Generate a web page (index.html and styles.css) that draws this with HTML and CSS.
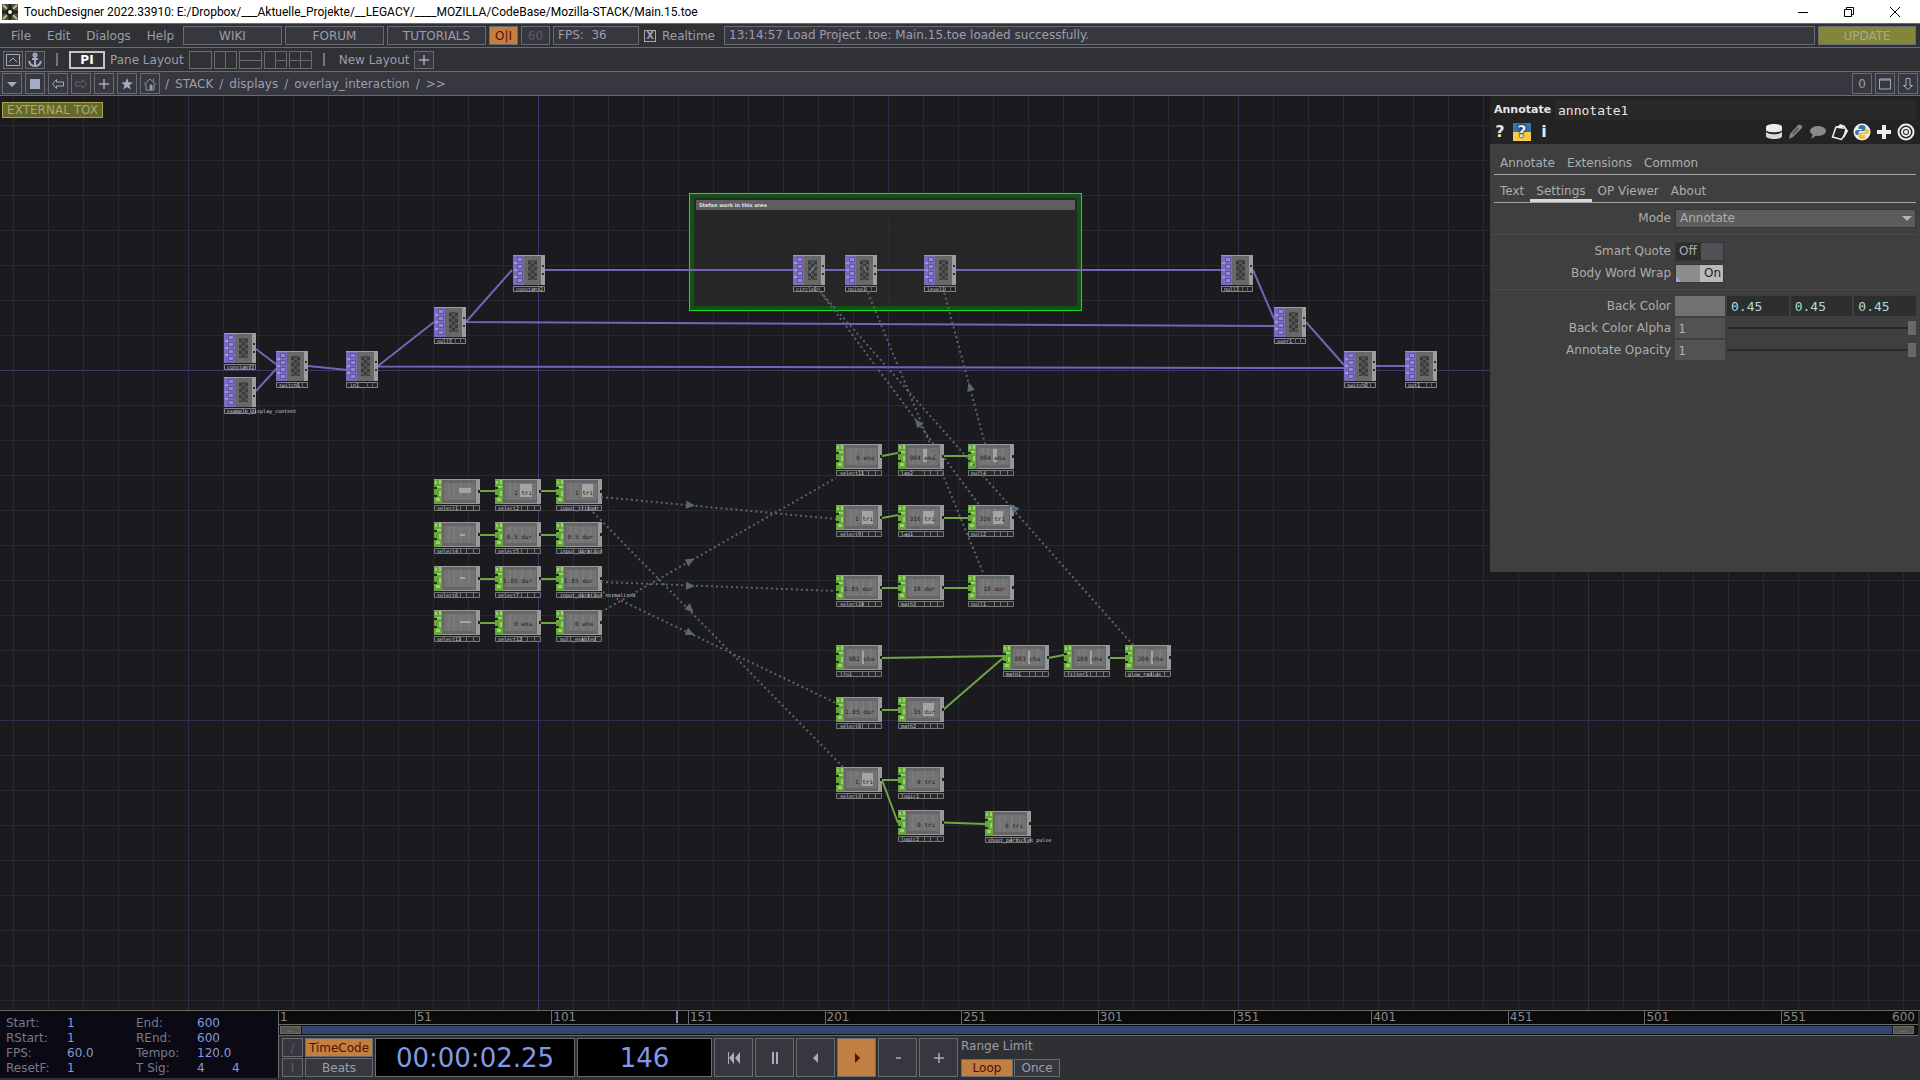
FILE: index.html
```html
<!DOCTYPE html>
<html lang="en">
<head>
<meta charset="utf-8">
<meta name="viewport" content="width=device-width, initial-scale=1">
<title>TouchDesigner</title>
<link rel="stylesheet" href="styles.css">
</head>
<body>
<header class="titlebar">
  <svg class="app-icon" width="16" height="16" viewBox="0 0 16 16"><rect width="16" height="16" fill="#4d5238"/><path d="M1 1l4 4M15 1l-4 4M1 15l4-4M15 15l-4-4" stroke="#b9bd9c" stroke-width="2"/><path d="M8 0v4M8 12v4M0 8h4M12 8h4" stroke="#23251b" stroke-width="3"/><circle cx="8" cy="8" r="4" fill="#1c1e16"/><circle cx="8" cy="8" r="2" fill="#f1f3e4"/></svg>
  <h1 class="window-title">TouchDesigner 2022.33910: E:/Dropbox/___Aktuelle_Projekte/__LEGACY/____MOZILLA/CodeBase/Mozilla-STACK/Main.15.toe</h1>
  <div class="window-controls">
    <button aria-label="Minimize"><svg width="12" height="12"><path d="M1 6.5h10" stroke="#000"/></svg></button>
    <button aria-label="Restore"><svg width="12" height="12" fill="none" stroke="#000"><path d="M1.500 3.500h7v7h-7zM3.500 3.500v-2h7v7h-2"/></svg></button>
    <button aria-label="Close"><svg width="12" height="12"><path d="M1 1l10 10M11 1L1 11" stroke="#000"/></svg></button>
  </div>
</header>

<nav class="menubar">
  <div class="menus"><button>File</button><button>Edit</button><button>Dialogs</button><button>Help</button></div>
  <button class="box link-box">WIKI</button>
  <button class="box link-box">FORUM</button>
  <button class="box link-box">TUTORIALS</button>
  <button class="box square active">O|I</button>
  <button class="box square dim">60</button>
  <div class="box fps">FPS:&nbsp; 36</div>
  <label class="realtime"><input type="checkbox" checked>Realtime</label>
  <output class="box status">13:14:57 Load Project .toe: Main.15.toe loaded successfully.</output>
  <button class="box update">UPDATE</button>
</nav>

<div class="layoutbar">
  <button class="box icon" aria-label="Collapse"><svg width="16" height="14" fill="none" stroke="#a4abc4"><path d="M1.500 1.500h13v11h-13zM4 9l4-4 4 4"/></svg></button>
  <button class="box icon" aria-label="Anchor"><svg width="16" height="16" fill="none" stroke="#a4abc4" stroke-width="2"><circle cx="8" cy="3" r="1.500"/><path d="M8 5v9M5 7h6M2 9c1 4 3 5 6 5s5-1 6-5"/></svg></button>
  <span class="divider"></span>
  <button class="pi">PI</button>
  <span class="caption">Pane Layout</span>
  <div class="layouts">
    <button class="box layout" aria-label="Single pane"></button>
    <button class="box layout" aria-label="Two columns"><svg width="21" height="16"><path d="M10.500 0v16"/></svg></button>
    <button class="box layout" aria-label="Two rows"><svg width="21" height="16"><path d="M0 8.500h21"/></svg></button>
    <button class="box layout" aria-label="Column and two rows"><svg width="21" height="16"><path d="M10.500 0v16M10 8.500h11"/></svg></button>
    <button class="box layout" aria-label="Four panes"><svg width="21" height="16"><path d="M10.500 0v16M0 8.500h21"/></svg></button>
  </div>
  <span class="divider"></span>
  <span class="caption">New Layout</span>
  <button class="box icon" aria-label="Add layout"><svg width="12" height="12"><path d="M6 1v10M1 6h10" stroke="#a9aaba" stroke-width="1.500"/></svg></button>
</div>

<nav class="pathbar">
  <button class="box icon" aria-label="Pane type"><svg width="12" height="12"><path d="M1 4h10L6 9z" fill="#a4abc4"/></svg></button>
  <button class="box icon" aria-label="Stop"><svg width="12" height="12"><path d="M1 1h10v10H1z" fill="#a4abc4"/></svg></button>
  <button class="box icon" aria-label="Back"><svg width="14" height="12" fill="none" stroke="#a4abc4"><path d="M1.500 6l4-4.500v2.500h7v4h-7v2.500z"/></svg></button>
  <button class="box icon" aria-label="Forward"><svg width="14" height="12" fill="none" stroke="#62656f"><path d="M12.500 6l-4-4.500v2.500h-7v4h7v2.500z"/></svg></button>
  <button class="box icon" aria-label="Add"><svg width="12" height="12"><path d="M6 1v10M1 6h10" stroke="#a9aaba" stroke-width="1.500"/></svg></button>
  <button class="box icon" aria-label="Bookmark"><svg width="14" height="14"><path d="M7 1l1.600 4.200 4.400.2-3.500 2.700 1.200 4.300L7 10l-3.700 2.400 1.200-4.300L1 5.400l4.400-.2z" fill="#a4abc4"/></svg></button>
  <button class="box icon" aria-label="Home"><svg width="14" height="14" fill="none" stroke="#8a8f9e"><path d="M1 7.500L7 2l6 5.500M3 7v6h8V7M10.500 4.500v-3"/><path d="M7 8h2v5H7z" fill="#a4abc4"/></svg></button>
  <div class="path"><span>/</span><a href="#stack">STACK</a><span>/</span><a href="#displays">displays</a><span>/</span><a href="#overlay">overlay_interaction</a><span>/</span><span>&gt;&gt;</span></div>
  <div class="pane-tools">
    <button class="box icon">0</button>
    <button class="box icon" aria-label="Maximize"><svg width="14" height="12" fill="none" stroke="#a4abc4"><path d="M1.500 1v10h11V1zM1 2h12"/></svg></button>
    <button class="box icon" aria-label="Parameters"><svg width="12" height="14" fill="none" stroke="#a4abc4"><path d="M6 12.500L1.500 8.500H4v-7h4v7h2.500z"/></svg></button>
  </div>
</nav>

<main class="network">
  <svg class="graph">
    <defs>
      <pattern id="grid" width="35" height="35" x="13" y="20" patternUnits="userSpaceOnUse"><path d="M0 .5h35M.5 0v35" stroke="#292a30"/></pattern>
      <pattern id="major" width="350" height="350" x="188" y="20" patternUnits="userSpaceOnUse"><path d="M0 .5h350M.5 0v350" stroke="#2d2e48"/></pattern>
      <pattern id="check" width="6" height="6" patternUnits="userSpaceOnUse"><path d="M0 0h3v3H0zM3 3h3v3H3z" fill="#555"/></pattern>
      <g id="top">
        <path d="M0 0h32v30H0z" fill="#686868"/><path d="M0 0h11v30H0z" fill="#7a6cbd"/><path d="M1 8h3M1 15h3M1 22h3" stroke="#9d8ff0" stroke-width="2"/>
        <path d="M4.500 2.500h5v4h-5zM4.500 9.500h5v4h-5zM4.500 16.500h5v4h-5zM4.500 23.500h5v4h-5z" fill="#9389d0" stroke="#5d519f"/>
        <path d="M15 5h9v20h-9z" fill="#3a3b3a"/><path d="M15 5h9v20h-9z" fill="url(#check)"/>
        <path d="M28 0h4v30h-4z" fill="#9e9e9e"/><path d="M29 10h2v2h-2zM29 18h2v2h-2z" fill="#333"/><path d="M0 .5h32" stroke="#9e9e9e"/>
        <path d="M.5 31.500h31v5H.5z" fill="#222326" stroke="#85868a"/><path d="M21.500 31v6M26.500 31v6" stroke="#65666a"/>
      </g>
      <g id="chop">
        <path d="M0 0h46v25H0z" fill="#666"/><path d="M10 4h31v17H10z" fill="#737373"/><path d="M15 4v16M20 4v16M27 4v16M35 4v16" stroke="#838383"/>
        <path d="M0 0h8v25H0z" fill="#67a63a"/><path d="M1 2h2v3H1zM5 1h2v4H5zM3 7h4v2H3zM5 12h2v5H5zM2 19h4v3H2z" fill="#93d566"/><path d="M0 8h3v2H0zM0 16h3v2H0z" fill="#1e2c18"/>
        <path d="M42 0h4v25h-4z" fill="#989a9a"/><path d="M44 11h2v3h-2z" fill="#222"/><path d="M0 .5h46M8 24.500h38" stroke="#999"/>
        <path d="M.5 26.500h45v5H.5z" fill="#26272a" stroke="#77787c"/><path d="M26.500 26v6M32.500 26v6M39.500 26v6" stroke="#74757a"/>
      </g>
      <path id="arrow" d="M-4 -4L5 0L-4 4z" fill="#566878"/>
    </defs>
    <g transform="translate(0 -96)">
      <rect width="100%" height="2000" fill="url(#grid)"/>
      <rect width="100%" height="2000" fill="url(#major)"/>
      <path d="M538.500 96v2000M0 370.500h4000" stroke="#3c3970"/>

      <!-- annotation frame -->
      <rect x="690" y="194" width="391" height="116" fill="#2b2b2b" opacity=".75"/>
      <rect x="692" y="196" width="387" height="112" fill="none" stroke="#0f5214" stroke-width="4"/>
      <rect x="689.500" y="193.500" width="392" height="117" fill="none" stroke="#22d82d"/>
      <rect x="696" y="200" width="379" height="10" fill="#5e5e5e"/>
      <text class="note" x="699" y="207">Stefan work in  this area</text>

      <g class="wire top-wire">
        <path d="M256 349L277 365M256 391L277 368M308 366L348 370M378 366L434 322M466 322L512 270M466 322L1274 326M378 366.500L1344 368M544 270H1221M1253 270L1274 319M1306 322L1344 365M1376 366H1405"/>
      </g>
      <g class="wire chop-wire">
        <path d="M480 491h15M541 491h15M480 535h15M541 535h15M480 579h15M541 579h15M480 623h15M541 623h15M882 456l16-3M943 456h25M882 518l16-3M943 518h25M882 588h16M943 588h25M882 658L1003 656M943 710L1003 658M1048 658l16-3M1109 658h16M882 710h16M882 780h16M882 780L898 823M943 822.500L985 824"/>
      </g>

      <g><use href="#top" x="224" y="333"/><text x="227" y="369">constant3</text></g>
      <g><use href="#top" x="224" y="377"/><text x="227" y="413">example_display_content</text></g>
      <g><use href="#top" x="276" y="351"/><text x="279" y="387">switch1</text></g>
      <g><use href="#top" x="346" y="351"/><text x="350" y="387">in1</text></g>
      <g><use href="#top" x="434" y="307"/><text x="437" y="343">null5</text></g>
      <g><use href="#top" x="513" y="255"/><text x="516" y="291">constant2</text></g>
      <g><use href="#top" x="793" y="255"/><text x="796" y="291">circle1</text><path d="M810 273l5-7" stroke="#5bb"/></g>
      <g><use href="#top" x="845" y="255"/><text x="848" y="291">noise1</text><path d="M864 266l2 6" stroke="#49a"/></g>
      <g><use href="#top" x="924" y="255"/><text x="927" y="291">level1</text></g>
      <g><use href="#top" x="1221" y="255"/><text x="1224" y="291">null3</text></g>
      <g><use href="#top" x="1274" y="307"/><text x="1277" y="343">over1</text></g>
      <g><use href="#top" x="1344" y="351"/><text x="1347" y="387">switch2</text></g>
      <g><use href="#top" x="1405" y="351"/><text x="1408" y="387">out1</text></g>

      <g><use href="#chop" x="434" y="479"/><path class="hi" d="M459 488h12v5h-12z"/><text x="437" y="510">select1</text></g>
      <g><use href="#chop" x="495" y="479"/><path class="hi" d="M520 484h12v13h-12z"/><text class="val" x="532" y="495">1 tri</text><text x="498" y="510">select2</text></g>
      <g><use href="#chop" x="556" y="479"/><path class="hi" d="M582 484h11v13h-11z"/><text class="val" x="593" y="495">1 tri</text><text x="560" y="510">input_trigger</text></g>
      <g><use href="#chop" x="434" y="522"/><path class="hi" d="M460 534h5v2h-5z"/><text x="437" y="553">select4</text></g>
      <g><use href="#chop" x="495" y="522"/><text class="val" x="532" y="539">0.5 dur</text><text x="498" y="553">select5</text></g>
      <g><use href="#chop" x="556" y="522"/><text class="val" x="593" y="539">0.5 dur</text><text x="560" y="553">input_duration</text></g>
      <g><use href="#chop" x="434" y="566"/><path class="hi" d="M460 577h5v2h-5z"/><text x="437" y="597">select6</text></g>
      <g><use href="#chop" x="495" y="566"/><text class="val" x="532" y="583">1.05 dur</text><text x="498" y="597">select7</text></g>
      <g><use href="#chop" x="556" y="566"/><text class="val" x="593" y="583">1.05 dur</text><text x="560" y="597">input_duration_normalized</text></g>
      <g><use href="#chop" x="434" y="610"/><path class="hi" d="M460 621h11v2h-11z"/><text x="437" y="641">select11</text></g>
      <g><use href="#chop" x="495" y="610"/><text class="val" x="532" y="626">0 ena</text><text x="498" y="641">select12</text></g>
      <g><use href="#chop" x="556" y="610"/><text class="val" x="593" y="626">0 ena</text><text x="560" y="641">null_enabled</text></g>

      <g><use href="#chop" x="836" y="444"/><text class="val" x="874" y="460">0 ena</text><text x="840" y="475">select11</text></g>
      <g><use href="#chop" x="898" y="444"/><path class="hi" d="M923 449h4v13h-4z"/><text class="val" x="935" y="460">984 ena</text><text x="901" y="475">lag2</text></g>
      <g><use href="#chop" x="968" y="444"/><path class="hi" d="M993 449h4v13h-4z"/><text class="val" x="1005" y="460">984 ena</text><text x="971" y="475">null4</text></g>
      <g><use href="#chop" x="836" y="505"/><path class="hi" d="M862 511h11v13h-11z"/><text class="val" x="873" y="521">1 tri</text><text x="840" y="536">select9</text></g>
      <g><use href="#chop" x="898" y="505"/><path class="hi" d="M923 511h11v13h-11z"/><text class="val" x="935" y="521">316 tri</text><text x="901" y="536">lag1</text></g>
      <g><use href="#chop" x="968" y="505"/><path class="hi" d="M993 511h10v13h-10z"/><text class="val" x="1005" y="521">316 tri</text><text x="971" y="536">null2</text></g>
      <g><use href="#chop" x="836" y="575"/><text class="val" x="873" y="591">1.05 dur</text><text x="840" y="606">select10</text></g>
      <g><use href="#chop" x="898" y="575"/><text class="val" x="935" y="591">18 dur</text><text x="901" y="606">math3</text></g>
      <g><use href="#chop" x="968" y="575"/><text class="val" x="1005" y="591">18 dur</text><text x="971" y="606">null1</text></g>

      <g><use href="#chop" x="836" y="645"/><path class="hi" d="M862 651h2v13h-2z"/><text class="val" x="874" y="661">982 cha</text><text x="840" y="676">lfo1</text></g>
      <g><use href="#chop" x="1003" y="645"/><path class="hi" d="M1028 651h2v13h-2z"/><text class="val" x="1040" y="661">883 cha</text><text x="1006" y="676">math1</text></g>
      <g><use href="#chop" x="1064" y="645"/><path class="hi" d="M1090 651h2v13h-2z"/><text class="val" x="1102" y="661">209 cha</text><text x="1067" y="676">filter1</text></g>
      <g><use href="#chop" x="1125" y="645"/><path class="hi" d="M1151 651h2v13h-2z"/><text class="val" x="1163" y="661">209 cha</text><text x="1128" y="676">glow_radius</text></g>
      <g><use href="#chop" x="836" y="697"/><text class="val" x="874" y="714">1.05 dur</text><text x="840" y="728">select8</text></g>
      <g><use href="#chop" x="898" y="697"/><path class="hi" d="M923 703h11v13h-11z"/><text class="val" x="935" y="714">.35 dur</text><text x="901" y="728">math2</text></g>
      <g><use href="#chop" x="836" y="767"/><path class="hi" d="M862 773h11v13h-11z"/><text class="val" x="873" y="784">1 tri</text><text x="840" y="798">select3</text></g>
      <g><use href="#chop" x="898" y="767"/><text class="val" x="935" y="784">0 tri</text><text x="901" y="798">logic1</text></g>
      <g><use href="#chop" x="898" y="810"/><text class="val" x="935" y="827">0 tri</text><text x="901" y="841">logic2</text></g>
      <g><use href="#chop" x="985" y="811"/><text class="val" x="1023" y="828">0 tri</text><text x="988" y="842">shoot_particles_pulse</text></g>

      <g class="ref">
        <path d="M817 288L1133 645M819 290L980 506M866 288L984 575M943 288L985 444M601 497L836 519M586 505L843 767M601 582L836 591M603 592L836 703M601 612L836 478"/>
      </g>
      <use href="#arrow" transform="translate(690 505) rotate(5)"/>
      <use href="#arrow" transform="translate(690 561) rotate(-30)"/>
      <use href="#arrow" transform="translate(690 586) rotate(2)"/>
      <use href="#arrow" transform="translate(690 609) rotate(45)"/>
      <use href="#arrow" transform="translate(690 633) rotate(25)"/>
      <use href="#arrow" transform="translate(918 423) rotate(-127)"/>
      <use href="#arrow" transform="translate(970 387) rotate(-105)"/>
      <use href="#arrow" transform="translate(1014 508) rotate(-132)"/>
    </g>
  </svg>
  <span class="external">EXTERNAL TOX</span>

  <aside class="params">
    <div class="params-head">
      <div class="op-name"><label for="opname">Annotate</label><input id="opname" value="annotate1"></div>
      <div class="op-tools">
        <button class="glyph">?</button>
        <button class="glyph py-help">?</button>
        <button class="glyph">i</button>
        <div class="op-actions">
          <button aria-label="Database"><svg width="18" height="18"><path d="M1 4c0-4 16-4 16 0v3c0 3-16 3-16 0z" fill="#ececec"/><path d="M1 9c3 3 13 3 16 0v4c0 4-16 4-16 0z" fill="#d8d8d8"/></svg></button>
          <button aria-label="Edit"><svg width="18" height="18"><path d="M2 16l1-5 8-9c3-1 5 1 4 3l-9 9z" fill="#858585"/><path d="M6 11l5-6" stroke="#4a4a4a" stroke-width="1.500"/></svg></button>
          <button aria-label="Comment"><svg width="18" height="18"><ellipse cx="9" cy="8" rx="8" ry="5" fill="#8a8a8a"/><path d="M4 11l-2 5 6-4z" fill="#8a8a8a"/></svg></button>
          <button aria-label="Copy"><svg width="18" height="18"><path d="M5 4L1.500 14l9 2.500L16 8l-3-5z" fill="none" stroke="#eee" stroke-width="1.500"/><path d="M6 5l3-4 3 1 1 4zM13 3l4 5-4 7-1-1 2-7z" fill="#eee"/></svg></button>
          <button aria-label="Python"><svg width="18" height="18"><circle cx="9" cy="9" r="8.500" fill="#eee"/><path d="M9 2c-3 0-3.500 1-3.500 3v1H9v1H4C1.500 7 1.500 12 4 12h1.500v-2c0-1.500 1-2 2-2h3C12 8 12.500 7 12.500 6V5C12.500 3 12 2 9 2z" fill="#3774a8"/><path d="M9 16c3 0 3.500-1 3.500-3v-1H9v-1h5c2.500 0 2.500-5 0-5h-1.500v1.500c0 1.500-1 2-2 2h-3C6 9.500 5.500 11 5.500 12v1c0 2 .5 3 3.500 3z" fill="#f5bd31"/></svg></button>
          <button aria-label="Add parameter"><svg width="18" height="18"><path d="M9 2v14M2 9h14" stroke="#eee" stroke-width="4"/></svg></button>
          <button aria-label="Target"><svg width="18" height="18" fill="none" stroke="#eee" stroke-width="2"><circle cx="9" cy="9" r="7.500"/><circle cx="9" cy="9" r="4"/><circle cx="9" cy="9" r="1" fill="#eee"/></svg></button>
        </div>
      </div>
    </div>
    <div class="tabs"><button>Annotate</button><button>Extensions</button><button>Common</button></div>
    <div class="tabs subtabs"><button>Text</button><button class="selected">Settings</button><button>OP Viewer</button><button>About</button></div>
    <form class="fields">
      <div class="row"><label for="mode">Mode</label><div class="select"><select id="mode"><option>Annotate</option></select></div></div>
      <hr>
      <div class="row"><label for="quote">Smart Quote</label><div class="toggle"><input type="checkbox" id="quote"><span>Off</span></div></div>
      <div class="row"><label for="wrap">Body Word Wrap</label><div class="toggle on"><input type="checkbox" id="wrap" checked><span>On</span></div></div>
      <hr>
      <div class="row"><label for="red">Back Color</label><div class="color"><span class="swatch"></span><input id="red" value="0.45"><input aria-label="Green" value="0.45"><input aria-label="Blue" value="0.45"></div></div>
      <div class="row"><label for="alpha">Back Color Alpha</label><div class="slide"><input id="alpha" value="1"><input type="range" aria-label="Back Color Alpha slider" value="100"></div></div>
      <div class="row"><label for="opacity">Annotate Opacity</label><div class="slide"><input id="opacity" value="1"><input type="range" aria-label="Annotate Opacity slider" value="100"></div></div>
    </form>
  </aside>
</main>

<footer class="timeline">
  <div class="info">
    <label for="start">Start:</label><input id="start" value="1"><label for="end">End:</label><input id="end" value="600">
    <label for="rstart">RStart:</label><input id="rstart" value="1"><label for="rend">REnd:</label><input id="rend" value="600">
    <label for="fps">FPS:</label><input id="fps" value="60.0"><label for="tempo">Tempo:</label><input id="tempo" value="120.0">
    <label for="resetf">ResetF:</label><input id="resetf" value="1"><label for="sig">T Sig:</label><span class="sig"><input id="sig" value="4"><input aria-label="Beat unit" value="4"></span>
  </div>
  <div class="transport">
    <div class="ruler">
      <span>1</span><span>51</span><span>101</span><span>151</span><span>201</span><span>251</span><span>301</span><span>351</span><span>401</span><span>451</span><span>501</span><span class="last">551<span>600</span></span>
      <i class="playhead"></i>
    </div>
    <div class="range"><button aria-label="Range start">...</button><div class="bar"></div><button aria-label="Range end">...</button></div>
    <div class="controls">
      <div class="pair narrow"><button class="box dim">/</button><button class="box dim">I</button></div>
      <div class="pair modes"><button class="box active">TimeCode</button><button class="box">Beats</button></div>
      <output class="display time">00:00:02.25</output>
      <output class="display frame">146</output>
      <button class="box play" aria-label="Jump to start"><svg width="14" height="14" fill="#a9abbd"><path d="M1 1h1v12H1zM7 1v12L2 7zM13 1v12L8 7z"/></svg></button>
      <button class="box play" aria-label="Pause"><svg width="14" height="14" fill="#a9abbd"><path d="M4 1h2v12H4zM8 1h2v12H8z"/></svg></button>
      <button class="box play" aria-label="Play reverse"><svg width="14" height="14" fill="#a9abbd"><path d="M9 2v10L4 7z"/></svg></button>
      <button class="box play active" aria-label="Play"><svg width="14" height="14" fill="#5c0d00"><path d="M5 2v10l5-5z"/></svg></button>
      <button class="box play" aria-label="Step back"><svg width="14" height="14"><path d="M5 7h5" stroke="#a9abbd" stroke-width="1.500"/></svg></button>
      <button class="box play" aria-label="Step forward"><svg width="14" height="14"><path d="M7 2v10M2 7h10" stroke="#a9abbd" stroke-width="1.500"/></svg></button>
      <div class="limit"><span>Range Limit</span><div><button class="box active">Loop</button><button class="box">Once</button></div></div>
    </div>
  </div>
</footer>
</body>
</html>
```
FILE: styles.css
```css
* { box-sizing: border-box; }
body {
  margin: 0;
  min-height: 100vh;
  display: flex;
  flex-direction: column;
  background: #1b1b1f;
  color: #9c9dac;
  font: 12px/16px Verdana, "DejaVu Sans", sans-serif;
}
button, input, select {
  margin: 0;
  padding: 0;
  border: 0;
  background: none;
  color: inherit;
  font: inherit;
}
input { min-width: 0; }
button { display: flex; align-items: center; justify-content: center; white-space: nowrap; }
svg { display: block; flex: none; }

.box { background: #37383f; border: 1px solid #696b6e; }
.active { background: #c17f42; color: #5c0d00; }
.dim { color: #5d5f68; }

/* Window title */
.titlebar {
  display: flex;
  align-items: center;
  height: 23px;
  padding: 0 2px;
  background: #fff;
  color: #000;
}
.window-title { margin: 0 auto 0 6px; font: 12px/20px "Segoe UI", Roboto, sans-serif; }
.window-controls { display: flex; }
.window-controls button { width: 46px; height: 20px; }

/* Menus */
.menubar {
  display: flex;
  align-items: center;
  gap: 3px;
  height: 24px;
  padding: 0 4px 0 11px;
  background: #2f3134;
  border-top: 1px solid #696b6e;
}
.menus { display: flex; gap: 16px; width: 169px; }
.menubar .box { height: 19px; }
.link-box { width: 99px; }
.square { width: 29px; }
.fps { width: 86px; padding-left: 4px; }
.realtime { display: flex; align-items: center; gap: 6px; width: 79px; padding-left: 2px; }
.realtime input {
  appearance: none;
  width: 12px;
  height: 12px;
  border: 1px solid #a8a9b0;
  font: bold 10px/10px Verdana, "DejaVu Sans", sans-serif;
  text-align: center;
}
.realtime input:checked::before { content: "X"; }
.status { flex: 1; padding-left: 4px; }
.menubar .update { width: 98px; background: #83853a; color: #a9aa86; }

.layoutbar {
  display: flex;
  align-items: center;
  gap: 2px;
  height: 24px;
  padding-left: 3px;
  background: #2f3134;
  border-top: 1px solid #696b6e;
}
.icon { width: 20px; height: 18px; }
.divider { width: 2px; height: 13px; margin: 0 9px; background: #74757c; }
.pi { width: 36px; height: 18px; border: 2px solid #c4c4c4; color: #fff; font-weight: bold; }
.layouts { display: flex; gap: 2px; }
.layout { width: 23px; height: 18px; background: none; }
.layout path { stroke: #696b6e; }
.caption { padding: 0 3px; }

.pathbar {
  display: flex;
  align-items: center;
  gap: 3px;
  height: 25px;
  padding: 0 2px;
  background: #36373f;
  border: solid #696b6e;
  border-width: 1px 0;
}
.pathbar .icon { height: 21px; }
.path { display: flex; gap: 6px; padding-left: 2px; }
.path a { color: inherit; text-decoration: none; }
.pane-tools { display: flex; gap: 3px; margin-left: auto; }

/* Network editor */
.network { position: relative; flex: 1; min-height: 480px; overflow: hidden; }
.graph { position: absolute; inset: 0; width: 100%; height: 100%; }
.graph text { font: 5px "DejaVu Sans Mono", monospace; fill: #d0d1d4; }
.graph .val { font-size: 6px; fill: #1c1c1c; text-anchor: end; }
.graph .note { font: bold 5px "DejaVu Sans", sans-serif; fill: #e0e0e0; }
.hi { fill: #a4a4a4; }
.wire { fill: none; stroke-width: 2; }
.top-wire { stroke: #7465b4; }
.chop-wire { stroke: #6fa545; }
.ref { fill: none; stroke: #58656f; stroke-width: 2; stroke-dasharray: 2 3; }
.external {
  position: absolute;
  left: 2px;
  top: 6px;
  width: 101px;
  border: 1px solid #a7a84e;
  background: #66682a;
  color: #a8a97a;
  line-height: 14px;
  text-align: center;
}

/* Parameters */
.params {
  position: absolute;
  top: 0;
  right: 0;
  width: 430px;
  min-height: 476px;
  background: #3f3f3f;
  color: #adadad;
}
.params-head { height: 48px; padding: 4px 4px 0; background: #232323; color: #e6e6e6; }
.op-name { display: flex; justify-content: space-between; align-items: center; height: 20px; font-size: 11px; font-weight: bold; }
.op-name input {
  width: 361px;
  height: 20px;
  padding-left: 3px;
  background: #292929;
  font: 13px "DejaVu Sans Mono", monospace;
}
.op-tools { display: flex; align-items: center; height: 24px; gap: 4px; margin: 0 1px 0 -3px; }
.glyph { width: 18px; height: 18px; font-size: 16px; font-weight: bold; }
.op-tools .py-help { background: linear-gradient(#3774a8 50%, #f5cd4a 50%); text-shadow: 0 0 2px #000, 0 0 2px #000; }
.op-actions { display: flex; gap: 4px; margin-left: auto; }
.tabs {
  display: flex;
  height: 31px;
  margin: 0 4px;
  align-items: flex-end;
  border-bottom: 1px solid #a5a5a5;
}
.subtabs { height: 28px; }
.tabs button { padding: 0 6px; height: 19px; border-bottom: 3px solid transparent; }
.tabs .selected { border-color: #d8d8d8; }
.fields { display: flex; flex-direction: column; padding: 4px 4px 0 0; }
.fields hr { width: 424px; margin: 5px 0 5px auto; border: 0; border-top: 1px solid #4b4b4b; }
.row { display: grid; grid-template-columns: 181px 1fr; gap: 4px; height: 22px; align-items: center; text-align: right; }
.select { position: relative; }
.select select { appearance: none; width: 100%; height: 19px; padding-left: 4px; background: #5c5c5c; border: 1px solid #353535; }
.select::after {
  content: "";
  position: absolute;
  right: 4px;
  top: 7px;
  border: 5px solid transparent;
  border-top-color: #b5b5b5;
  border-bottom: 0;
}
.toggle { display: flex; position: relative; width: 49px; height: 19px; align-items: center; background: linear-gradient(90deg, #2e2e2e 25px, #515057 25px); border: 1px solid #353535; }
.toggle input { appearance: none; position: absolute; inset: 0; }
.toggle span { padding-left: 3px; }
.toggle.on { background: linear-gradient(45deg, #a9a2e4 4px, transparent 4px), linear-gradient(90deg, #8c8c8c 24px, #b9b9b9 24px); color: #222; }
.toggle.on span { padding-left: 28px; }
.color { display: grid; grid-template-columns: 50px 1fr 1fr 1fr; gap: 2px; }
.swatch, .slide input:first-child { height: 20px; background: #717171; }
.color input { height: 20px; padding-left: 4px; background: #2e2e2e; color: #a9dcd6; font: 13px "DejaVu Sans Mono", monospace; }
.slide { display: grid; grid-template-columns: 50px 1fr; gap: 2px; align-items: center; }
.slide input:first-child { padding-left: 3px; background: #525252; font: 13px "DejaVu Sans Mono", monospace; }
.slide input[type="range"] { appearance: none; width: 100%; height: 14px; background: linear-gradient(transparent 6px, #2a2a2a 6px, #2a2a2a 8px, transparent 8px); }
.slide input[type="range"]::-webkit-slider-thumb { appearance: none; width: 8px; height: 14px; background: #686868; }

/* Timeline */
.timeline { display: flex; height: 70px; border-top: 1px solid #696b60; background: #2f3033; }
.info {
  display: grid;
  grid-template-columns: 61px 69px 61px 1fr;
  grid-auto-rows: 15px;
  width: 279px;
  height: 67px;
  padding: 5px 0 0 6px;
  border-right: 1px solid #696b6e;
  background: #0a0914;
  color: #77798a;
  line-height: 15px;
}
.info input { width: 60px; height: 15px; color: #8599dc; }
.sig { display: flex; }
.info .sig input { width: 35px; }
.transport { flex: 1; padding-right: 2px; }
.ruler { display: flex; position: relative; height: 14px; background: #0b0b0c; color: #86878b; border-bottom: 1px solid #696b60; line-height: 12px; }
.ruler > span { flex: 50; padding-left: 1px; border-left: 1px solid #696b6e; }
.ruler > span:first-child { border-color: transparent; padding-left: 0; }
.ruler .last { flex: 49; display: flex; justify-content: space-between; padding-right: 3px; }
.playhead { position: absolute; left: 24.2%; top: 0; width: 2px; height: 12px; background: #8587b4; }
.range { display: flex; gap: 1px; height: 11px; padding: 1px 4px 1px 1px; background: #111; border-bottom: 1px solid #696b60; }
.range button { width: 21px; height: 8px; background: #555; border: 1px solid #6c6c62; color: #909090; font-size: 8px; line-height: 4px; }
.range .bar { flex: 1; height: 8px; background: #354572; }
.controls { display: flex; gap: 2px; padding: 2px 3px; }
.pair { display: grid; grid-template-rows: 19px 19px; gap: 1px; width: 68px; }
.pair.narrow { width: 21px; }
.display { border: 1px solid #696b6e; background: #000; color: #8199e6; font-size: 26px; line-height: 38px; text-align: center; height: 39px; }
.time { width: 200px; }
.frame { width: 135px; }
.play { width: 39px; height: 39px; }
.limit { display: flex; flex-direction: column; justify-content: space-between; height: 39px; padding-left: 1px; }
.limit div { display: flex; gap: 1px; }
.limit .box { width: 46px; height: 18px; }
.limit .active { width: 52px; }
```
